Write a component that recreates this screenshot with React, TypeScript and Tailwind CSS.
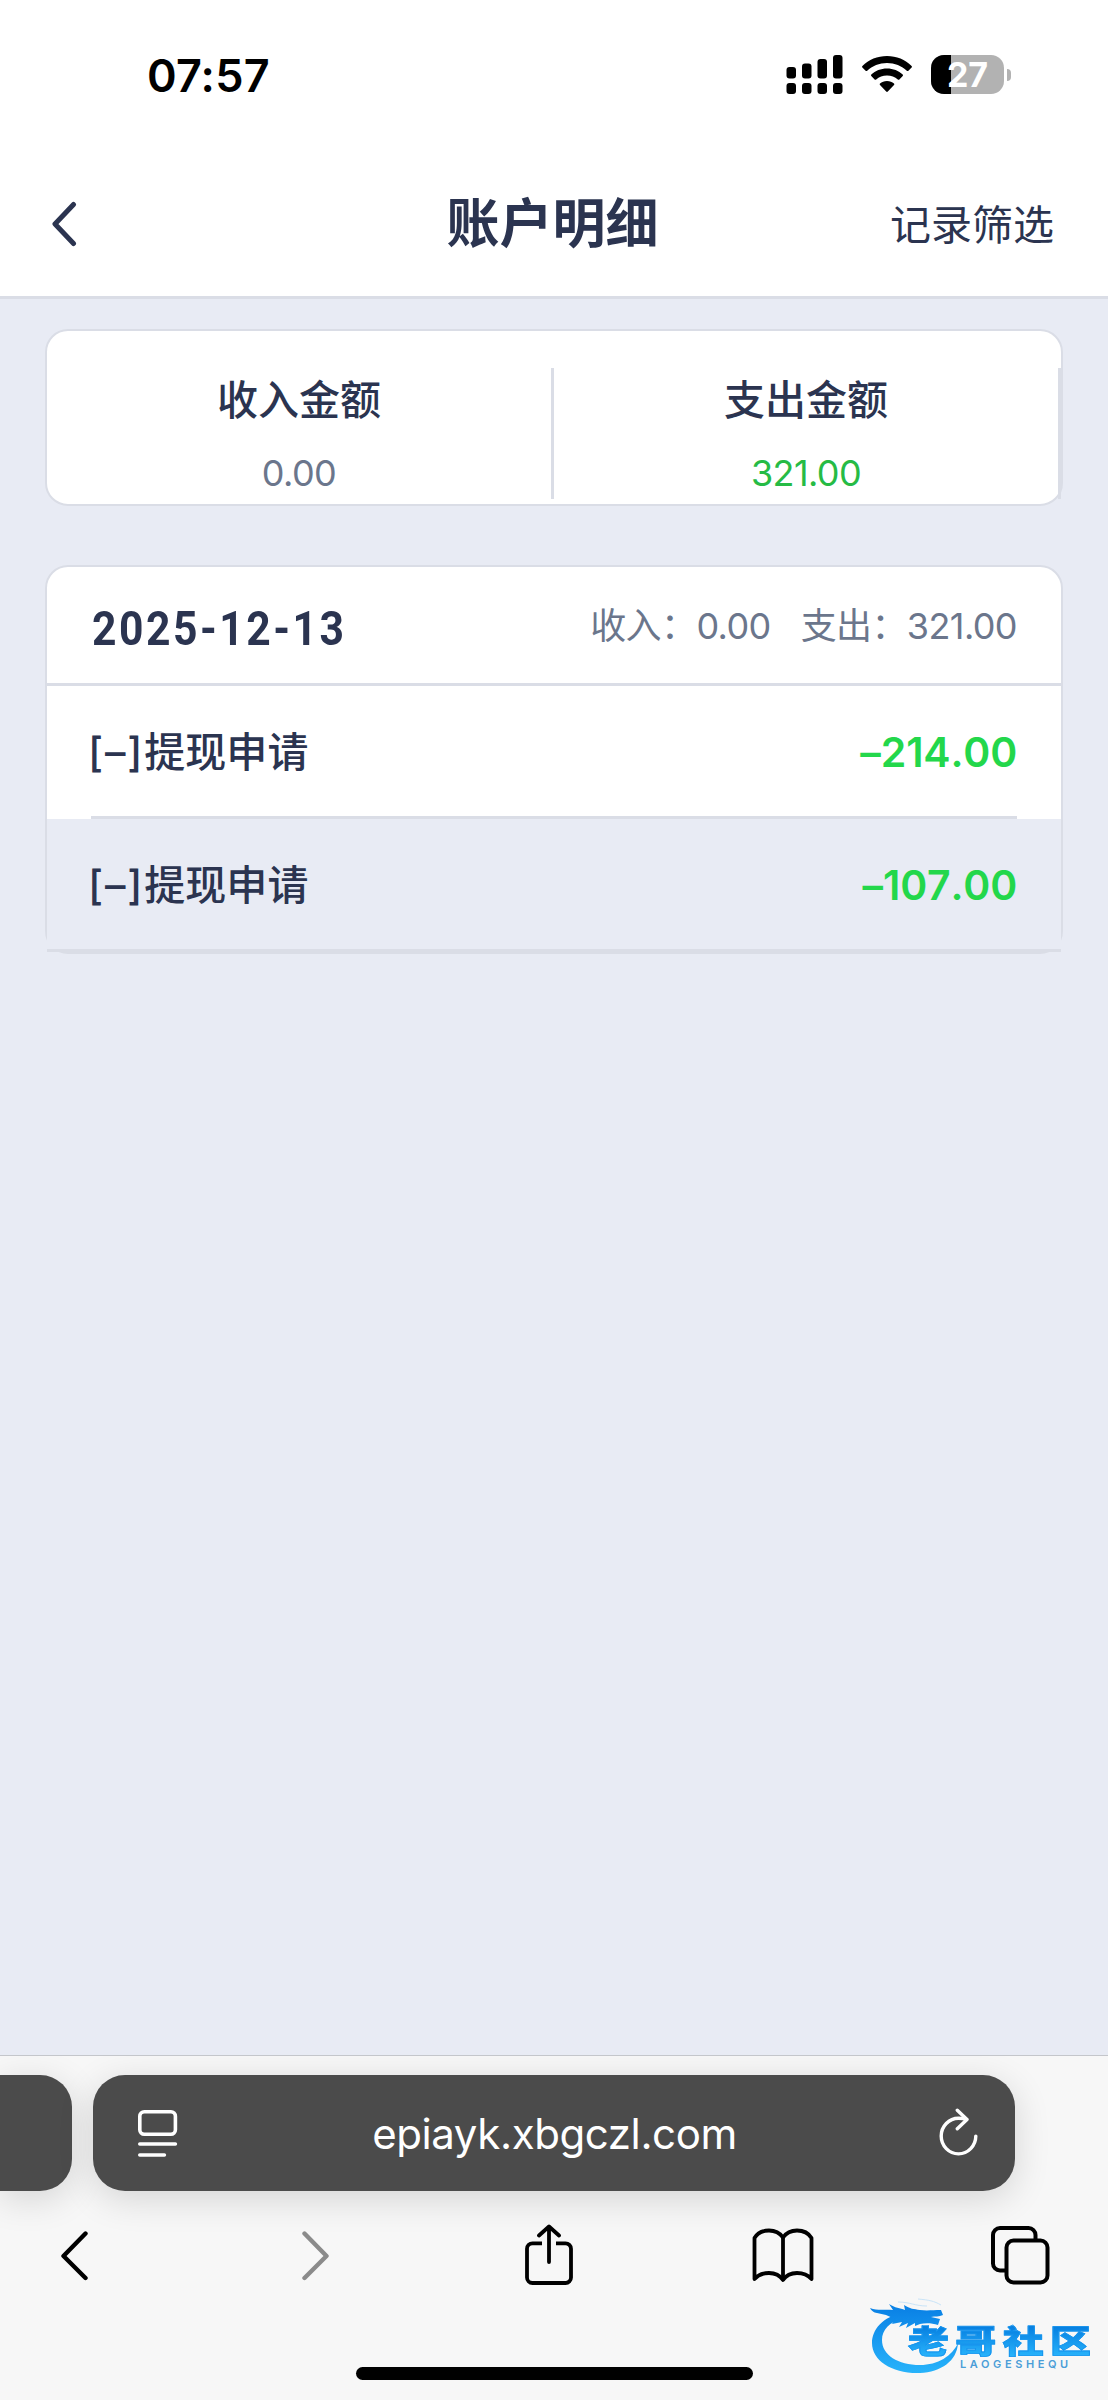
type Entry = {
  id: number;
  title: string;
  amount: string;
  pressed?: boolean;
};

const entries: Entry[] = [
  { id: 1, title: '提现申请', amount: '214.00' },
  { id: 2, title: '提现申请', amount: '107.00', pressed: true },
];

function SignalIcon() {
  return (
    <svg width="57" height="40" viewBox="0 0 57 40" className="shrink-0">
      <rect x="0.500" y="12" width="9.500" height="11.500" rx="3" />
      <rect x="16" y="8.500" width="9.500" height="15" rx="3" />
      <rect x="31.500" y="4" width="9.500" height="19.500" rx="3" />
      <rect x="47" y="0" width="9.500" height="23.500" rx="3" />
      <rect x="0.500" y="28" width="9.500" height="11" rx="3" />
      <rect x="16" y="28" width="9.500" height="11" rx="3" />
      <rect x="31.500" y="28" width="9.500" height="11" rx="3" />
      <rect x="47" y="28" width="9.500" height="11" rx="3" />
    </svg>
  );
}

function WifiIcon() {
  return (
    <svg width="50" height="40" viewBox="0 0 50 40" className="shrink-0">
      <path d="M25 1C15.500 1 6.700 4.700 .4 10.900c-.5.500-.5 1.100 0 1.600l3.200 3.200c.5.500 1.100.5 1.600 0C10.300 10.900 17.300 8 25 8s14.700 2.900 19.800 7.700c.5.500 1.100.5 1.600 0l3.200-3.200c.5-.5.5-1.100 0-1.600C43.300 4.700 34.500 1 25 1z" />
      <path d="M25 13.500c-6.200 0-11.700 2.300-15.700 6-.5.500-.5 1.100 0 1.600l3.300 3.300c.5.500 1.100.5 1.600 0 2.800-2.500 6.600-4 10.800-4s8 1.500 10.800 4c.5.500 1.100.5 1.600 0l3.300-3.300c.5-.5.5-1.100 0-1.600-4-3.700-9.500-6-15.700-6z" />
      <path d="M25 26c-2.800 0-5.200 1-7 2.500-.5.500-.5 1 0 1.500l6.200 6.500c.5.500 1.100.5 1.600 0l6.200-6.500c.5-.5.5-1 0-1.500-1.800-1.500-4.200-2.500-7-2.500z" />
    </svg>
  );
}

function Battery({ level }: { level: number }) {
  return (
    <div className="flex items-center gap-[3px]">
      <div className="relative flex h-[39px] w-[73px] items-center justify-center rounded-[13px] bg-[#b2b2b2]">
        <div className="absolute inset-y-0 left-0 rounded-l-[13px] bg-black" style={{ width: `${level}%` }} />
        <span className="relative text-[34px] leading-[39px] font-bold text-white">{level}</span>
      </div>
      <div className="h-[12px] w-[4px] rounded-r-full bg-[#b2b2b2]" />
    </div>
  );
}

function StatusBar() {
  return (
    <div className="flex h-[148px] items-start justify-between pt-[55px] pr-[97px] pl-[147px]">
      <span className="text-[45px] leading-[42px] font-semibold tracking-[0.2px] text-black">07:57</span>
      <div className="flex items-start">
        <SignalIcon />
        <div className="ml-[19px]">
          <WifiIcon />
        </div>
        <div className="ml-[19px]">
          <Battery level={27} />
        </div>
      </div>
    </div>
  );
}

function NavBar() {
  return (
    <header className="grid h-[151px] grid-cols-[1fr_auto_1fr] items-center border-b-[3px] border-[#dadde6] pt-[4px] pr-[54px] pl-[51px]">
      <button type="button" aria-label="返回" className="justify-self-start">
        <svg width="26" height="46" viewBox="0 0 26 46" fill="none" stroke="#2b3450" strokeWidth="5" strokeLinecap="round" strokeLinejoin="round">
          <path d="M22.500 3.500 4 23l18.500 19.500" />
        </svg>
      </button>
      <h1 className="text-[53px] leading-[60px] font-bold">账户明细</h1>
      <button type="button" className="justify-self-end pt-[2px] text-[41px] leading-[48px]">
        记录筛选
      </button>
    </header>
  );
}

function SummaryCell({ label, value, valueClass }: { label: string; value: string; valueClass: string }) {
  return (
    <div className="flex h-[131px] flex-1 flex-col items-center border-r-[3px] border-[#dadde6] pt-[8px]">
      <span className="text-[41px] leading-[48px] font-medium">{label}</span>
      <span className={`mt-[25px] text-[36px] leading-[48px] tracking-[-0.6px] ${valueClass}`}>{value}</span>
    </div>
  );
}

function EntryRow({ entry }: { entry: Entry }) {
  if (entry.pressed) {
    return (
      <li className="flex h-[133px] items-center justify-between border-b-[3px] border-[#dadde6] bg-[#e8ebf4] px-[44px]">
        <EntryText entry={entry} />
      </li>
    );
  }
  return (
    <li className="px-[44px]">
      <div className="flex h-[133px] items-center justify-between border-b-[3px] border-[#dadde6]">
        <EntryText entry={entry} />
      </div>
    </li>
  );
}

function EntryText({ entry }: { entry: Entry }) {
  return (
    <>
      <span className="-ml-[3px] flex pt-[2px] text-[41px] leading-[48px] font-medium">
        <span className="tracking-[1.8px]">[–]</span>
        <span className="tracking-[0.1px]">{entry.title}</span>
      </span>
      <span className="flex pt-[2px] text-[41px] leading-[48px] font-semibold text-[#23d74b]">
        <span>–</span>
        <span className="tracking-[-0.2px] [font-kerning:none]">{entry.amount}</span>
      </span>
    </>
  );
}

function AddressBar() {
  return (
    <div className="flex gap-[21px] overflow-x-clip">
      <div className="h-[116px] w-[72px] rounded-r-[32px] bg-[#4b4b4b] shadow-[0_8px_36px_rgba(0,0,0,0.14)]" />
      <div className="flex h-[116px] w-[922px] items-center justify-between rounded-[32px] bg-[#4b4b4b] pr-[37px] pl-[44px] text-white shadow-[0_8px_36px_rgba(0,0,0,0.14)]">
        <svg width="41" height="48" viewBox="0 0 41 48" fill="none" stroke="currentColor" strokeWidth="3.6" strokeLinecap="round">
          <rect x="2.800" y="2.800" width="35.600" height="22.400" rx="4.500" />
          <path d="M2.800 35h35.600M2.800 46h24.600" />
        </svg>
        <span className="pt-[2px] pr-[6px] text-[42px] leading-[50px] tracking-[-0.4px]">epiayk.xbgczl.com</span>
        <svg width="41" height="50" viewBox="0 0 41 50" fill="none" stroke="currentColor" strokeWidth="3.4" strokeLinecap="round" strokeLinejoin="round">
          <path d="M29.500 11.600c-2.500-1-5.300-1.300-8-1.300a17.300 17.800 0 1 0 17.300 17.800" />
          <path d="m20.300 2.200 9.700 9.300-9.700 9.300" />
        </svg>
      </div>
    </div>
  );
}

function Toolbar() {
  return (
    <div className="flex h-[62px] items-center justify-between pr-[58px] pl-[60px]">
      <svg width="29" height="52" viewBox="0 0 29 52" fill="none" stroke="#000" strokeWidth="4.4" strokeLinecap="round" strokeLinejoin="round">
        <path d="M25.500 4.500 3.500 27l22 22" />
      </svg>
      <svg width="29" height="52" viewBox="0 0 29 52" fill="none" stroke="#8b8b8b" strokeWidth="4.400" strokeLinecap="round" strokeLinejoin="round" className="ml-[36px]">
        <path d="m3.500 4.500 22 22.500-22 22" />
      </svg>
      <svg width="50" height="62" viewBox="0 0 50 62" fill="none" stroke="#000" strokeWidth="3.800" strokeLinecap="round" strokeLinejoin="round" className="ml-[18px]">
        <path d="M18 19.300H8.500a5.500 5.500 0 0 0-5.500 5.500v28.700a5.500 5.500 0 0 0 5.500 5.500h33a5.500 5.500 0 0 0 5.500-5.500V24.800a5.500 5.500 0 0 0-5.500-5.500H32" strokeLinecap="butt" />
        <path d="M25 38V3M15 11.500 25 2.500l10 9" />
      </svg>
      <svg width="62" height="54" viewBox="0 0 62 54" fill="none" stroke="#000" strokeWidth="3.800" strokeLinecap="round" strokeLinejoin="round" className="ml-[3px]">
        <path d="M31 9.500C27.500 4.500 22.500 2.500 17 2.500S5.500 5 2.500 10v41c3.500-4 8.500-6 14.500-6s11 2.500 14 7c3-4.500 8-7 14-7s11 2 14.500 6V10c-3-5-9-7.500-14.500-7.500S34.500 4.500 31 9.500z" />
        <path d="M31 9.500V51" />
      </svg>
      <svg width="60" height="60" viewBox="0 0 60 60" fill="none" stroke="#000" strokeWidth="4">
        <path d="M45.500 15.500V10A7 7 0 0 0 38.500 3H10a7 7 0 0 0-7 7v28.500a7 7 0 0 0 7 7h5.500" />
        <rect x="16.500" y="15.500" width="41" height="42" rx="7" />
      </svg>
    </div>
  );
}

function Watermark() {
  return (
    <div className="absolute right-[17px] bottom-[22px] h-[84px] w-[221px]">
      <svg width="221" height="84" viewBox="0 0 221 84" className="absolute inset-0">
        <defs>
          <linearGradient id="wave" gradientUnits="userSpaceOnUse" x1="0" y1="16" x2="0" y2="80">
            <stop offset="0" stopColor="#0b83e6" />
            <stop offset="1" stopColor="#28b4fb" />
          </linearGradient>
        </defs>
        <g fill="url(#wave)">
          <path d="M34 18C12 23 2 36 2 49c0 18 21 31 48 30 21-1 37-12 38-30-6 13-20 22-38 22-22 0-38-10-38-25 0-10 7-18 22-22z" />
          <path d="M0 14c8 3 15 1 23 2l-4-6c6 4 11 4 16 6l-1-5c6 4 10 4 16 5 7 1 13 0 21 0l2 5c-4 2-8 1-12 2l9 2-2 6c-6-2-13-2-18-1l-5 2v-3l-9 5 2-5-9 4 3-5-10 2 3-5-9-4-9-2c-3 0-6-3-7-5z" />
        </g>
        <path d="M28 8c12 0 17 4 29 4M48 5c11 1 16 2 23 6" fill="none" stroke="#c9e4f8" strokeWidth="1" />
      </svg>
      <div className="absolute right-0 bottom-[20px] flex w-[183px] origin-bottom scale-y-[0.78] justify-between bg-linear-to-b from-[#067ee0] to-[#2ab6fc] bg-clip-text text-[41px] leading-[41px] font-black text-transparent [-webkit-text-stroke:1px_#1795ee]">
        <span>老</span>
        <span>哥</span>
        <span>社</span>
        <span>区</span>
      </div>
      <div className="absolute top-[64px] left-[90px] text-[11px] leading-[12px] font-semibold tracking-[3.600px] text-[#4b9ed8]">LAOGESHEQU</div>
    </div>
  );
}

export default function App() {
  return (
    <div className="relative flex h-[2400px] w-[1108px] flex-col overflow-hidden bg-[#e8ebf4] font-['Inter','Noto_Sans_CJK_SC',sans-serif] text-[#2b3450]">
      <div className="bg-white">
        <StatusBar />
        <NavBar />
      </div>

      <main className="flex flex-1 flex-col gap-[59px] px-[45px] pt-[30px]">
        <section className="flex h-[177px] items-start rounded-[23px] border-2 border-[#dadde6] bg-white pt-[37px]">
          <SummaryCell label="收入金额" value="0.00" valueClass="text-[#6b768c]" />
          <SummaryCell label="支出金额" value="321.00" valueClass="text-[#26bb45]" />
        </section>

        <section className="rounded-[23px] border-2 border-[#dadde6] bg-white">
          <div className="flex h-[119px] items-center justify-between border-b-[3px] border-[#dadde6] px-[44px]">
            <h2 className="ml-px origin-left scale-x-[0.87] pt-[7px] font-['Roboto'] text-[49px] leading-[56px] font-bold tracking-[2.9px]">2025-12-13</h2>
            <div className="flex gap-[30px] pt-[2px] text-[36px] leading-[48px] tracking-[-0.6px] text-[#6b768c]">
              <span>收入：0.00</span>
              <span>支出：321.00</span>
            </div>
          </div>
          <ul>
            {entries.map((entry) => (
              <EntryRow key={entry.id} entry={entry} />
            ))}
          </ul>
        </section>
      </main>

      <footer className="flex h-[345px] flex-col overflow-hidden border-t border-[#c4c6cb] bg-[#f7f7f7] pt-[19px]">
        <AddressBar />
        <div className="mt-[33px]">
          <Toolbar />
        </div>
        <div className="mx-auto mt-auto mb-[20px] h-[13px] w-[397px] rounded-full bg-black" />
      </footer>

      <Watermark />
    </div>
  );
}
